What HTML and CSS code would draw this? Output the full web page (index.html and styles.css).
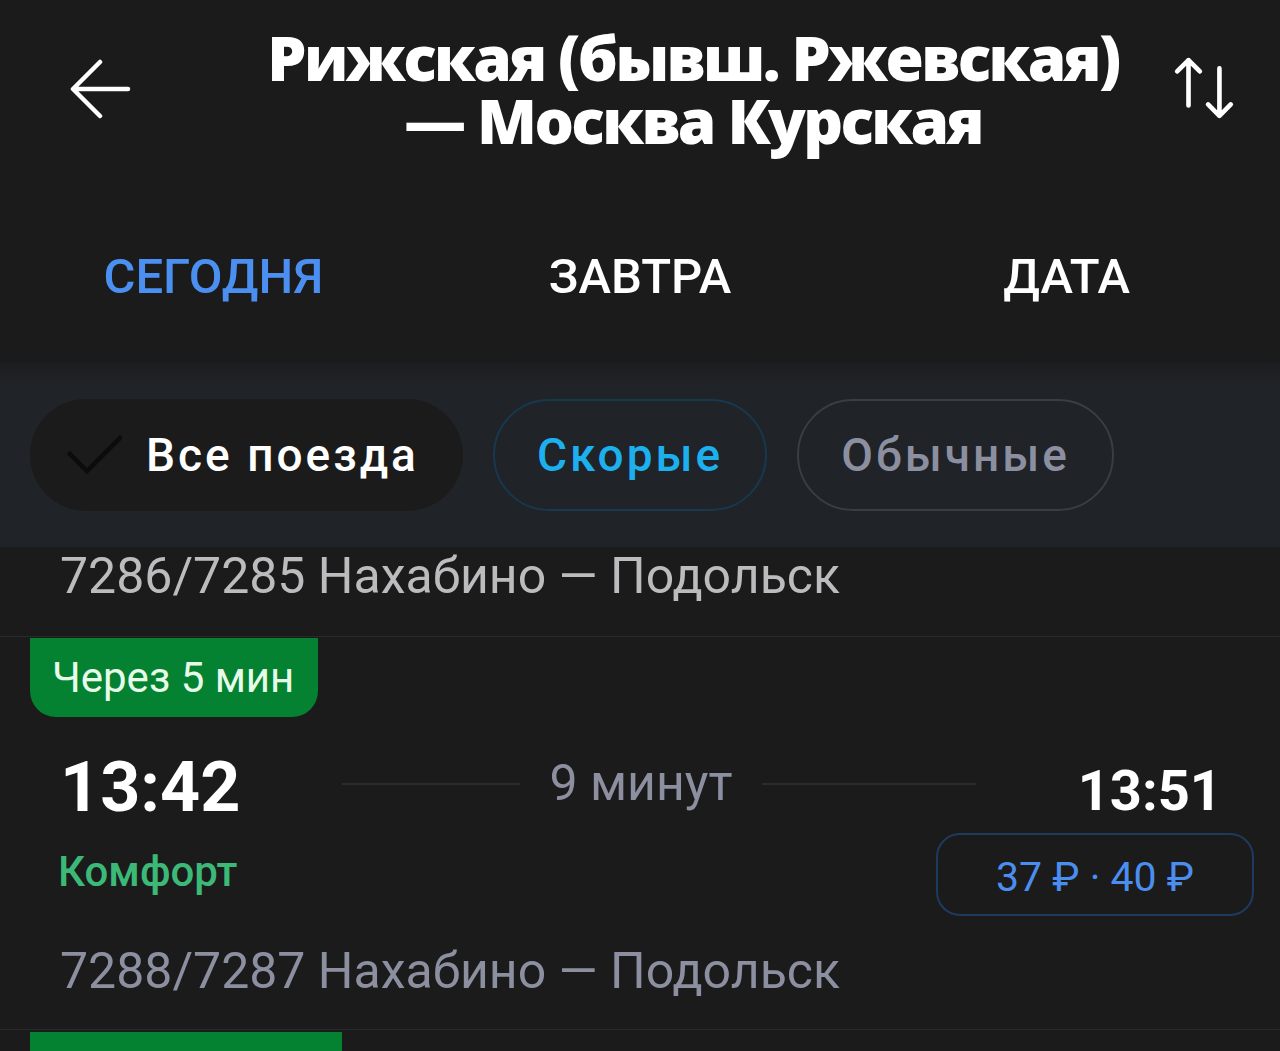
FILE: index.html
```html
<!DOCTYPE html>
<html lang="ru">
<head>
<meta charset="utf-8">
<title>Расписание</title>
<link rel="stylesheet" href="styles.css">
</head>
<body>
<div class="screen">
  <header class="topbar">
    <button class="icon-btn back" aria-label="Назад">
      <svg width="64" height="60" viewBox="0 0 64 60"><path d="M60 30H6M32 3L5 30l27 27" fill="none" stroke="#fff" stroke-width="4.5" stroke-linecap="round" stroke-linejoin="round"/></svg>
    </button>
    <h1 class="title"><span class="title-line">Рижская (бывш. Ржевская)</span><span class="title-line">— Москва Курская</span></h1>
    <button class="icon-btn swap" aria-label="Поменять">
      <svg width="66" height="66" viewBox="0 0 64 64"><path d="M16 48V4M5 15L16 4l11 11M46 12v46M35 47l11 11 11-11" fill="none" stroke="#fff" stroke-width="4.5" stroke-linecap="round" stroke-linejoin="round"/></svg>
    </button>
  </header>

  <nav class="tabs">
    <div class="tab tab-active">СЕГОДНЯ</div>
    <div class="tab">ЗАВТРА</div>
    <div class="tab">ДАТА</div>
  </nav>

  <div class="filters">
    <div class="chip chip-selected">
      <svg class="check" width="56" height="44" viewBox="0 0 56 44"><path d="M4 20l17 17L54 4" fill="none" stroke="#0c0c0c" stroke-width="4.5" stroke-linecap="square"/></svg>
      <span>Все поезда</span>
    </div>
    <div class="chip chip-fast"><span>Скорые</span></div>
    <div class="chip chip-plain"><span>Обычные</span></div>
  </div>

  <div class="list">
    <div class="row row-cut">
      <div class="route route-light">7286/7285 Нахабино — Подольск</div>
    </div>

    <div class="row">
      <div class="badge">Через 5 мин</div>
      <div class="times">
        <div class="side side-left">
          <div class="dep">13:42</div>
          <div class="line"></div>
        </div>
        <div class="dur">9 минут</div>
        <div class="side side-right">
          <div class="line"></div>
          <div class="arr">13:51</div>
        </div>
      </div>
      <div class="meta">
        <div class="class-name">Комфорт</div>
        <div class="price">37 ₽ · 40 ₽</div>
      </div>
      <div class="route">7288/7287 Нахабино — Подольск</div>
    </div>

    <div class="row">
      <div class="badge badge-wide">Через 12 мин</div>
    </div>
  </div>
</div>
</body>
</html>
```

FILE: styles.css
```css
* { box-sizing: border-box; }
html, body { margin: 0; padding: 0; }
body {
  background: #1b1b1b;
  font-family: Roboto, "Noto Sans", sans-serif;
  color: #fff;
  overflow: hidden;
}
.screen {
  width: 1280px;
  height: 1051px;
  overflow: hidden;
  background: #1b1b1b;
}

/* Header */
.topbar {
  height: 190px;
  padding: 26px 0 38px;
  display: flex;
  align-items: center;
}
.icon-btn {
  background: none;
  border: 0;
  padding: 0;
  display: flex;
  align-items: center;
  justify-content: center;
}
.back { width: 200px; }
.swap { width: 94px; justify-content: flex-start; margin-left: -14px; margin-right: 14px; }
.title {
  flex: 1;
  margin: 0;
  text-align: center;
  font-family: "Open Sans", "Noto Sans", sans-serif;
  font-weight: 800;
  font-size: 62px;
  letter-spacing: -2.6px;
  color: #fff;
}
.title-line {
  display: block;
  height: 63px;
  line-height: 63px;
}

/* Tabs */
.tabs {
  height: 172px;
  display: grid;
  grid-template-columns: 1fr 1fr 1fr;
  align-items: center;
}
.tab {
  text-align: center;
  font-size: 49px;
  font-weight: 500;
  color: #fff;
}
.tab-active { color: #4b8ff0; }

/* Filter chips */
.filters {
  height: 185px;
  background: linear-gradient(#1c1d1f 0, #202327 22px, #202327 100%);
  display: flex;
  align-items: center;
  gap: 30px;
  padding: 0 30px;
}
.chip {
  height: 112px;
  border-radius: 56px;
  display: flex;
  align-items: center;
  padding: 0 42px;
  font-size: 46px;
  font-weight: 500;
  letter-spacing: 3px;
  border: 2px solid transparent;
}
.chip-selected {
  background: #1b1b1b;
  padding: 0 42px 0 34px;
  gap: 24px;
  color: #fff;
}
.check { display: block; margin-top: 2px; }
.chip-fast { border-color: #17384f; color: #1cb0ee; }
.chip-plain { border-color: #3a3d43; color: #8b8fa0; }

/* List */
.row {
  border-bottom: 1px solid #272b30;
}
.row-cut { padding-top: 1px; }
.route {
  padding: 0 0 30px 60px;
  font-size: 50px;
  line-height: 56px;
  color: #8b8fa0;
}
.route-light { color: #bcbcbe; padding-bottom: 32px; }

.badge {
  display: inline-block;
  margin: 1px 0 0 30px;
  width: 288px;
  height: 79px;
  background: #048232;
  color: #e8fbe8;
  border-radius: 0 0 26px 26px;
  font-size: 42px;
  line-height: 79px;
  padding-left: 22px;
}
.badge-wide { width: 312px; margin-top: 2px; }

.times {
  margin-top: 33px;
  height: 74px;
  display: grid;
  grid-template-columns: 1fr auto 1fr;
  column-gap: 30px;
  align-items: center;
  padding: 0 58px 0 60px;
}
.side {
  display: flex;
  align-items: center;
}
.dep {
  font-size: 70px;
  line-height: 74px;
  font-weight: 700;
}
.line {
  flex: 1;
  height: 2px;
  background: #2a2c30;
  margin-top: -6px;
}
.side-left .line { margin-left: 102px; }
.side-right .line { margin-right: 102px; }
.dur {
  font-size: 50px;
  line-height: 50px;
  color: #8b8fa0;
  margin-top: -8px;
}
.arr {
  font-size: 56px;
  line-height: 56px;
  font-weight: 700;
  margin-top: 8px;
}

.meta {
  margin-top: 9px;
  display: flex;
  align-items: center;
  justify-content: space-between;
  padding: 0 26px 0 58px;
}
.class-name {
  font-size: 42px;
  font-weight: 500;
  color: #3cb877;
  margin-top: -6px;
}
.price {
  width: 318px;
  height: 83px;
  border: 2px solid #1d3b5e;
  border-radius: 24px;
  display: flex;
  align-items: center;
  justify-content: center;
  font-size: 41px;
  color: #4b8ef0;
  padding-top: 4px;
}
.meta + .route { margin-top: 27px; }
```
